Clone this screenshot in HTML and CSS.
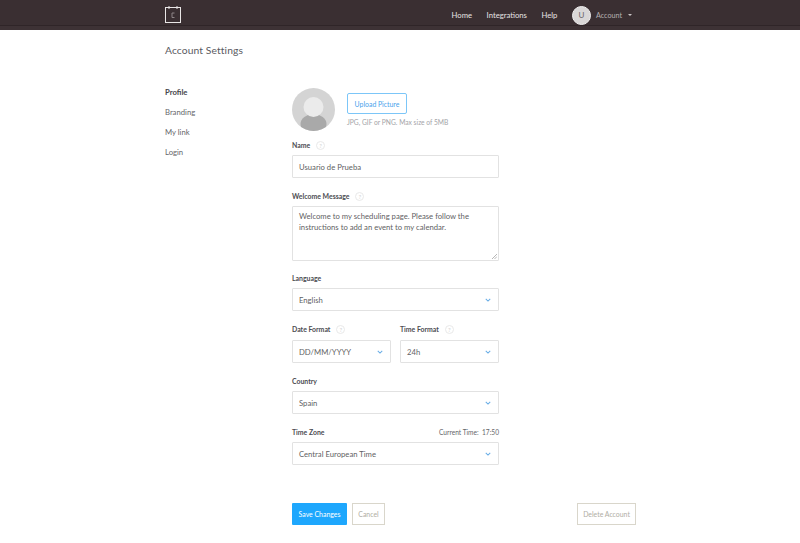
FILE: index.html
```html
<!DOCTYPE html>
<html lang="en">
<head>
<meta charset="utf-8">
<title>Account Settings</title>
<link rel="stylesheet" href="styles.css">
</head>
<body>
<header class="topbar">
  <div class="topbar-inner">
    <svg class="logo" width="17" height="17" viewBox="0 0 17 17" fill="none" stroke="#e9e6e6">
      <rect x="0.5" y="1.5" width="15" height="15"/>
      <path d="M4 0v3M12 0v3" stroke-width="1"/>
      <path d="M9.5 7H7v4.5h2.500" stroke="#8d8587"/>
    </svg>
    <nav class="topnav">
      <a class="topnav-link">Home</a>
      <a class="topnav-link">Integrations</a>
      <a class="topnav-link">Help</a>
      <span class="account">
        <span class="account-avatar">U</span>
        <span class="account-name">Account</span>
        <span class="account-caret"></span>
      </span>
    </nav>
  </div>
</header>
<main class="page">
  <h1 class="title">Account Settings</h1>
  <div class="columns">
    <ul class="sidenav">
      <li class="sidenav-item active">Profile</li>
      <li class="sidenav-item">Branding</li>
      <li class="sidenav-item">My link</li>
      <li class="sidenav-item">Login</li>
    </ul>
    <div class="content">
      <form class="form">
        <div class="picture">
          <svg class="avatar" width="43" height="43" viewBox="0 0 43 43">
            <defs><clipPath id="av"><circle cx="21.500" cy="21.500" r="21.500"/></clipPath></defs>
            <circle cx="21.500" cy="21.500" r="21.500" fill="#d4d4d4"/>
            <g clip-path="url(#av)">
              <ellipse cx="21.500" cy="36" rx="13" ry="10" fill="#a9a9a9"/>
              <circle cx="21.500" cy="19" r="10" fill="#ebebeb"/>
            </g>
          </svg>
          <div class="picture-side">
            <span class="btn-upload">Upload Picture</span>
            <span class="hint">JPG, GIF or PNG. Max size of 5MB</span>
          </div>
        </div>

        <div class="label-row name-row"><span class="label">Name</span><span class="info">?</span></div>
        <div class="field">Usuario de Prueba</div>

        <div class="label-row gap-a"><span class="label">Welcome Message</span><span class="info">?</span></div>
        <div class="field area">Welcome to my scheduling page. Please follow the instructions to add an event to my calendar.
          <svg class="grip" width="5" height="5" viewBox="0 0 6 6" stroke="#a8a8a8" fill="none"><path d="M0 6L6 0M3 6L6 3"/></svg>
        </div>

        <div class="label-row gap-b"><span class="label">Language</span></div>
        <div class="field select">English<svg class="chev" width="6" height="4" viewBox="0 0 7 5" fill="none" stroke="#6aaee6" stroke-width="1.300"><path d="M.7 1l2.800 2.800L6.300 1"/></svg></div>

        <div class="pair">
          <div class="pair-col">
            <div class="label-row"><span class="label">Date Format</span><span class="info">?</span></div>
            <div class="field select">DD/MM/YYYY<svg class="chev" width="6" height="4" viewBox="0 0 7 5" fill="none" stroke="#6aaee6" stroke-width="1.300"><path d="M.7 1l2.800 2.800L6.300 1"/></svg></div>
          </div>
          <div class="pair-col">
            <div class="label-row"><span class="label">Time Format</span><span class="info">?</span></div>
            <div class="field select">24h<svg class="chev" width="6" height="4" viewBox="0 0 7 5" fill="none" stroke="#6aaee6" stroke-width="1.300"><path d="M.7 1l2.800 2.800L6.300 1"/></svg></div>
          </div>
        </div>

        <div class="label-row gap-c"><span class="label">Country</span></div>
        <div class="field select">Spain<svg class="chev" width="6" height="4" viewBox="0 0 7 5" fill="none" stroke="#6aaee6" stroke-width="1.300"><path d="M.7 1l2.800 2.800L6.300 1"/></svg></div>

        <div class="label-row gap-c split"><span class="label">Time Zone</span><span class="current">Current Time:&nbsp; 17:50</span></div>
        <div class="field select">Central European Time<svg class="chev" width="6" height="4" viewBox="0 0 7 5" fill="none" stroke="#6aaee6" stroke-width="1.300"><path d="M.7 1l2.800 2.800L6.300 1"/></svg></div>
      </form>
      <div class="actions">
        <span class="btn btn-save">Save Changes</span>
        <span class="btn btn-ghost">Cancel</span>
        <span class="btn btn-ghost btn-delete">Delete Account</span>
      </div>
    </div>
  </div>
</main>
</body>
</html>
```
FILE: styles.css
```css
* { box-sizing: border-box; }
html, body { margin: 0; padding: 0; }
body {
  background: #fff;
  color: #4a4a4f;
  font-family: "Lato", "Liberation Sans", sans-serif;
  font-size: 8px;
  height: 543px;
  overflow: hidden;
}
.topbar {
  height: 30px;
  background: #3a2f32;
  box-shadow: inset 0 -4px 0 #3d3235, inset 0 -5px 0 #2f2528;
}
.topbar-inner {
  height: 30px;
  padding: 0 168px 0 165px;
  display: flex;
  align-items: center;
  justify-content: space-between;
}
.logo { display: block; margin-top: -1px; }
.topnav { display: flex; align-items: center; color: #e6e3e3; font-size: 7.700px; }
.topnav-link { margin-right: 14.500px; }
.account { display: flex; align-items: center; }
.account-avatar {
  width: 19px;
  height: 19px;
  border-radius: 50%;
  background: #d9d7d7;
  border: 1px solid #efeeee;
  color: #6a6467;
  display: flex;
  align-items: center;
  justify-content: center;
  font-size: 8px;
}
.account-name { margin-left: 5px; color: #b5afb1; font-size: 7.200px; }
.account-caret {
  margin-left: 6px;
  border: 2px solid transparent;
  border-top-color: #c9c5c6;
  border-bottom-width: 0;
}
.page { padding: 0 164px 0 165px; }
.title {
  margin: 14px 0 0;
  font-size: 10.300px;
  line-height: 13px;
  font-weight: 400;
  color: #5a5a5f;
  letter-spacing: .1px;
}
.columns { display: flex; margin-top: 26px; }
.sidenav { list-style: none; margin: -1px 0 0; padding: 0; width: 127px; font-size: 7.700px; }
.sidenav-item { height: 20px; line-height: 20px; color: #66666a; }
.sidenav-item.active { font-weight: 700; color: #45454a; }
.content { flex: 1; display: flex; flex-direction: column; }
.form { width: 207px; }
.picture { display: flex; height: 43px; margin-top: 5px; }
.avatar { display: block; }
.picture-side { margin-left: 12px; padding-top: 5px; display: flex; flex-direction: column; align-items: flex-start; }
.btn-upload {
  width: 60px;
  height: 21px;
  border: 1px solid #7cc6f8;
  border-radius: 2px;
  color: #4aa3ec;
  font-size: 6.900px;
  display: flex;
  align-items: center;
  justify-content: center;
}
.hint { margin-top: 4px; color: #a4a4a8; font-size: 6.700px; line-height: 9px; white-space: nowrap; }
.label-row { display: flex; align-items: center; height: 10px; margin-bottom: 5px; }
.label { font-size: 6.900px; font-weight: 700; color: #4c4c51; line-height: 10px; }
.info {
  margin-left: 6px;
  width: 9px;
  height: 9px;
  border: 1px solid #e9e9e9;
  border-radius: 50%;
  color: #d2d2d2;
  font-size: 6px;
  line-height: 7px;
  text-align: center;
}
.name-row { margin-top: 9px; }
.gap-a { margin-top: 13px; }
.gap-b { margin-top: 12px; }
.gap-c { margin-top: 13px; }
.split { justify-content: space-between; }
.current { font-size: 6.600px; color: #66666a; }
.field {
  height: 23px;
  border: 1px solid #e2e2e2;
  border-radius: 1px;
  padding: 0 7px 0 6px;
  font-size: 7.700px;
  color: #5f5f64;
  display: flex;
  align-items: center;
  justify-content: space-between;
  background: #fff;
}
.area {
  display: block;
  position: relative;
  height: 55px;
  padding: 4px 6px;
  line-height: 11px;
}
.grip { position: absolute; right: 1px; bottom: 1px; }
.chev { display: block; }
.pair { display: flex; gap: 9px; margin-top: 13px; }
.pair-col { flex: 1; min-width: 0; }
.pair .label-row { margin-bottom: 6px; }
.actions { display: flex; width: 344px; margin-top: 38px; gap: 5px; }
.btn {
  height: 22px;
  display: flex;
  align-items: center;
  justify-content: center;
  font-size: 6.900px;
}
.btn-save { width: 55px; background: #1ea7fd; color: #fff; border-radius: 1px; }
.btn-ghost { width: 33px; border: 1px solid #d9d6cb; color: #b0ada4; }
.btn-delete { width: 59px; margin-left: auto; }
```
